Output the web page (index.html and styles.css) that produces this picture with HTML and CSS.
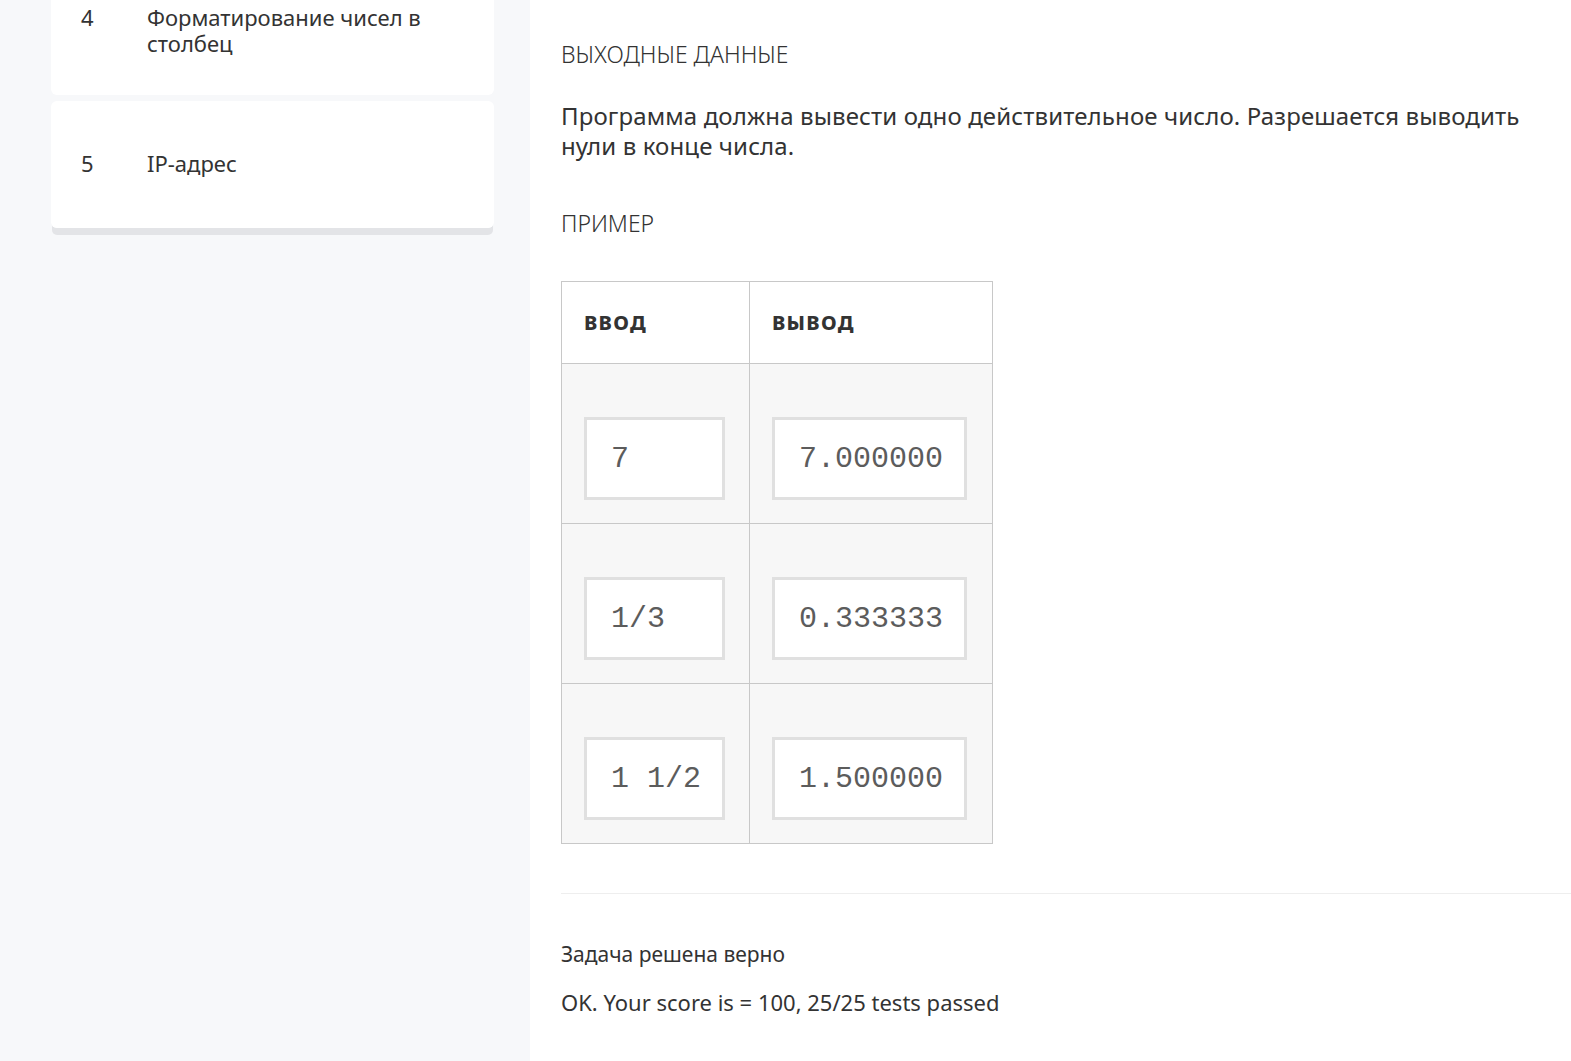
FILE: index.html
```html
<!DOCTYPE html>
<html lang="ru">
<head>
<meta charset="utf-8">
<link rel="stylesheet" href="styles.css">
</head>
<body>
<div class="page">
  <aside class="sidebar">
    <div class="lessons">
      <div class="lesson lesson-first">
        <div class="lesson-row">
          <span class="num">4</span>
          <span class="title">Форматирование чисел в столбец</span>
        </div>
      </div>
      <div class="lesson">
        <div class="lesson-row">
          <span class="num">5</span>
          <span class="title">IP-адрес</span>
        </div>
      </div>
    </div>
  </aside>
  <main class="content">
    <h3 class="section-title first">ВЫХОДНЫЕ ДАННЫЕ</h3>
    <p class="text">Программа должна вывести одно действительное число. Разрешается выводить нули в конце числа.</p>
    <h3 class="section-title second">ПРИМЕР</h3>
    <table class="sample">
      <thead>
        <tr><th class="col-in">ввод</th><th class="col-out">вывод</th></tr>
      </thead>
      <tbody>
        <tr><td><div class="box box-in">7</div></td><td><div class="box box-out">7.000000</div></td></tr>
        <tr><td><div class="box box-in">1/3</div></td><td><div class="box box-out">0.333333</div></td></tr>
        <tr><td><div class="box box-in">1 1/2</div></td><td><div class="box box-out">1.500000</div></td></tr>
      </tbody>
    </table>
    <hr class="divider">
    <div class="result">
      <p class="result-title">Задача решена верно</p>
      <p class="result-text">OK. Your score is = 100, 25/25 tests passed</p>
    </div>
  </main>
</div>
</body>
</html>
```
FILE: styles.css
```css
* { box-sizing: border-box; }
html, body { margin: 0; padding: 0; }
body {
  font-family: "Noto Sans", "Open Sans", sans-serif;
  color: #333;
  background: #fff;
  overflow: hidden;
}
.page {
  display: flex;
  height: 1061px;
}
.sidebar {
  width: 530px;
  flex: none;
  background: #f7f8fa;
  padding: 0 36px 0 51px;
}
.lessons {
  margin-top: -35px;
  display: flex;
  flex-direction: column;
  gap: 6px;
  border-radius: 6px;
  box-shadow: 0 8px 0 -1px #e3e4e7;
}
.lesson {
  background: #fff;
  border-radius: 6px;
  height: 127px;
  display: flex;
  align-items: center;
  padding: 0 40px 4px 30px;
  font-size: 22px;
  line-height: 26px;
  color: #333;
}
.lesson-first { height: 130px; padding-bottom: 0; }
.lesson-row {
  display: flex;
  align-items: flex-start;
  width: 100%;
}
.num {
  width: 66px;
  flex: none;
}
.title { flex: 1; }
.content {
  flex: 1;
  padding: 0 0 0 31px;
}
.section-title {
  font-weight: 300;
  font-size: 23px;
  line-height: 30px;
  margin: 0;
  color: #333;
}
.section-title.first { margin-top: 39px; }
.section-title.second { margin-top: 47px; }
.text {
  font-size: 24px;
  line-height: 30px;
  letter-spacing: 0.13px;
  margin: 32px 0 0;
  max-width: 990px;
  color: #333;
}
.sample {
  margin-top: 43px;
  border-collapse: collapse;
  border: 1px solid #c8c8c8;
}
.sample th {
  font-size: 20px;
  font-weight: 800;
  text-transform: uppercase;
  letter-spacing: 1.3px;
  text-align: left;
  height: 82px;
  padding: 0 22px;
  border: 1px solid #c8c8c8;
  background: #fff;
  color: #333;
}
.sample td {
  background: #f7f7f7;
  border: 1px solid #c8c8c8;
  height: 160px;
  padding: 30px 22px 0;
}
.col-in { width: 188px; }
.col-out { width: 243px; }
.box {
  background: #fff;
  border: 3px solid #e0e0e0;
  height: 83px;
  display: flex;
  align-items: center;
  padding: 0 0 0 24px;
  font-family: "Courier New", "Nimbus Mono PS", "Nimbus Mono L", "FreeMono", "Liberation Mono", monospace;
  font-size: 30px;
  white-space: pre;
  color: #5c5c5c;
}
.box-in { width: 141px; }
.box-out { width: 195px; }
.divider {
  margin: 49px 0 0;
  border: 0;
  border-top: 1px solid #eeeeee;
}
.result { padding-top: 45px; }
.result-title {
  margin: 0;
  font-size: 21px;
  line-height: 30px;
}
.result-text {
  margin: 18px 0 0;
  font-size: 22px;
  line-height: 30px;
}
```
